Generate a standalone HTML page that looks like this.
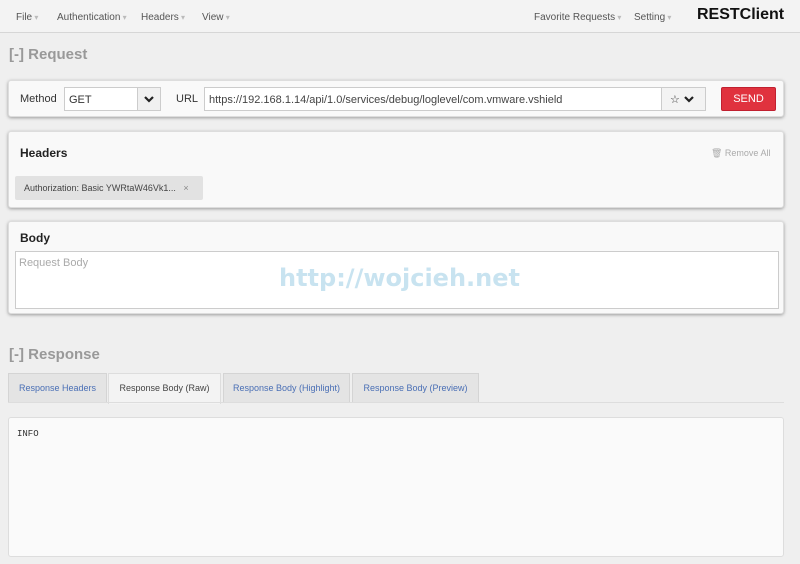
<!DOCTYPE html>
<html><head><meta charset="utf-8"><style>
*{box-sizing:border-box;margin:0;padding:0}
body{width:800px;height:564px;overflow:hidden;background:#efefef;font-family:"Liberation Sans",sans-serif;position:relative;color:#333}
.abs{position:absolute}
.top{left:0;top:0;width:800px;height:33px;background:#f3f3f3;border-bottom:1px solid #d6d6d6}
.mi{position:absolute;top:12px;font-size:10px;color:#555}
.mi:after{content:" ▾";color:#bbb;font-size:8px}
.panel{position:absolute;left:8px;width:776px;background:#f9f9f9;border:1px solid #ddd;border-radius:3px;box-shadow:0 1px 3px rgba(0,0,0,.35)}
.h2{position:absolute;font-size:15px;font-weight:bold;color:#999}
</style></head><body>
<div class="abs top">
<span class="mi" style="left:16px">File</span>
<span class="mi" style="left:57px">Authentication</span>
<span class="mi" style="left:141px">Headers</span>
<span class="mi" style="left:202px">View</span>
<span class="mi" style="left:534px">Favorite Requests</span>
<span class="mi" style="left:634px">Setting</span>
<span class="abs" style="left:697px;top:6px;font-size:16px;font-weight:bold;color:#111">RESTClient</span>
</div>
<div class="h2" style="left:9px;top:46px">[-] Request</div>
<div class="panel" style="top:80px;height:37px">
<span class="abs" style="left:11px;top:12px;font-size:11px">Method</span>
<div class="abs" style="left:55px;top:6px;width:97px;height:24px;background:#fff;border:1px solid #ccc;font-size:11px;padding:6px 4px">GET</div>
<div class="abs" style="left:128px;top:6px;width:24px;height:24px;background:#f0f0f0;border:1px solid #ccc">
<svg width="22" height="22" viewBox="0 0 22 22"><path d="M7 9l4 4 4-4" fill="none" stroke="#222" stroke-width="2.2"/></svg></div>
<span class="abs" style="left:167px;top:12px;font-size:11px">URL</span>
<div class="abs" style="left:195px;top:6px;width:458px;height:24px;background:#fff;border:1px solid #ccc;font-size:11px;padding:6px 4px;color:#444">https://192.168.1.14/api/1.0/services/debug/loglevel/com.vmware.vshield</div>
<div class="abs" style="left:652px;top:6px;width:45px;height:24px;background:#f3f3f3;border:1px solid #ccc;font-size:11px;padding:5px 8px">☆
<svg width="12" height="10" viewBox="0 0 12 10" style="vertical-align:-1px"><path d="M2 3l4 4 4-4" fill="none" stroke="#222" stroke-width="2.2"/></svg></div>
<div class="abs" style="left:712px;top:6px;width:55px;height:24px;background:#e0323e;border:1px solid #c02030;border-radius:2px;color:#fff;font-size:11px;text-align:center;line-height:22px">SEND</div>
</div>
<div class="panel" style="top:131px;height:77px">
<span class="abs" style="left:11px;top:14px;font-size:12px;font-weight:bold;color:#222">Headers</span>
<span class="abs" style="left:702px;top:16px;font-size:9px;color:#aaa">🗑 Remove All</span>
<div class="abs" style="left:6px;top:44px;width:188px;height:24px;background:#e2e2e2;border-radius:2px;font-size:9px;padding:7px 9px;color:#444">Authorization: Basic YWRtaW46Vk1... <span style="margin-left:5px;color:#888">×</span></div>
</div>
<div class="panel" style="top:221px;height:93px">
<span class="abs" style="left:11px;top:9px;font-size:12px;font-weight:bold;color:#222">Body</span>
<div class="abs" style="left:6px;top:29px;width:764px;height:58px;background:#fff;border:1px solid #ccc;font-size:11px;color:#aaa;padding:5px 3px">Request Body</div>
<span class="abs" style="left:270px;top:42px;font-family:'DejaVu Sans',sans-serif;font-size:24px;font-weight:bold;color:#c8e3f0">http://wojcieh.net</span>
</div>
<div class="h2" style="left:9px;top:346px">[-] Response</div>
<div class="abs" style="left:8px;top:373px;width:99px;height:30px;background:#e4e4e4;border:1px solid #d4d4d4;font-size:9px;color:#4a6fb5;text-align:center;line-height:28px">Response Headers</div>
<div class="abs" style="left:108px;top:373px;width:113px;height:31px;background:#f3f3f3;border:1px solid #ddd;border-bottom:none;font-size:9px;color:#444;text-align:center;line-height:28px">Response Body (Raw)</div>
<div class="abs" style="left:223px;top:373px;width:127px;height:30px;background:#e4e4e4;border:1px solid #d4d4d4;font-size:9px;color:#4a6fb5;text-align:center;line-height:28px">Response Body (Highlight)</div>
<div class="abs" style="left:352px;top:373px;width:127px;height:30px;background:#e4e4e4;border:1px solid #d4d4d4;font-size:9px;color:#4a6fb5;text-align:center;line-height:28px">Response Body (Preview)</div>
<div class="abs" style="left:8px;top:402px;width:776px;height:1px;background:#ddd"></div>
<div class="abs" style="left:8px;top:417px;width:776px;height:140px;background:#fafafa;border:1px solid #ddd;border-radius:3px;font-family:'Liberation Mono',monospace;font-size:9px;padding:11px 8px;color:#333">INFO</div>
</body></html>
